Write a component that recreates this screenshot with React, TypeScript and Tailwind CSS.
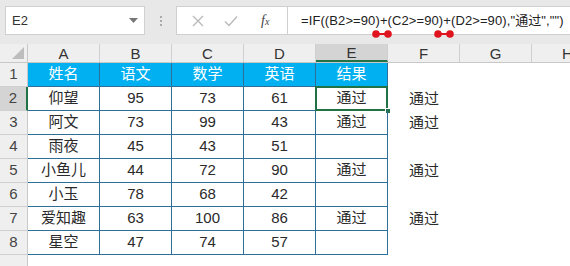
const cols = ["A", "B", "C", "D", "E", "F", "G", "H"];

const rows = [
  ["姓名", "语文", "数学", "英语", "结果"],
  ["仰望", "95", "73", "61", "通过"],
  ["阿文", "73", "99", "43", "通过"],
  ["雨夜", "45", "43", "51", ""],
  ["小鱼儿", "44", "72", "90", "通过"],
  ["小玉", "78", "68", "42", ""],
  ["爱知趣", "63", "100", "86", "通过"],
  ["星空", "47", "74", "57", ""],
];

const fcol = ["", "通过", "通过", "", "通过", "", "通过", ""];

function Dumbbell({ left }: { left: number }) {
  return (
    <svg className="absolute top-[30px]" style={{ left }} width="20" height="8" viewBox="0 0 20 8">
      <line x1="4" y1="4" x2="16" y2="4" stroke="#e0141e" strokeWidth="2" />
      <circle cx="4" cy="4" r="3.8" fill="#e0141e" />
      <circle cx="16" cy="4" r="3.8" fill="#e0141e" />
    </svg>
  );
}

export default function App() {
  return (
    <div className="w-[570px] h-[266px] overflow-hidden bg-white font-['Liberation_Sans','Noto_Sans_CJK_SC',sans-serif] text-[#2a2a2a]">
      {/* formula bar */}
      <div className="relative h-[44px] bg-[#e8e8e8] flex items-start pt-[6px]">
        <div className="ml-[5px] w-[140px] h-[29px] bg-white border border-[#d0d0d0] flex items-center justify-between pl-[6px] pr-[6px]">
          <span className="text-[13px] text-[#333]">E2</span>
          <svg width="9" height="5" viewBox="0 0 9 5"><path d="M0 0h9L4.5 5z" fill="#777" /></svg>
        </div>
        <div className="w-[31px] h-[29px] flex flex-col items-center justify-center gap-[2px]">
          <span className="w-[2px] h-[2px] bg-[#aaa]" />
          <span className="w-[2px] h-[2px] bg-[#aaa]" />
          <span className="w-[2px] h-[2px] bg-[#aaa]" />
        </div>
        <div className="w-[112px] h-[29px] bg-white border border-[#d0d0d0] flex items-center pl-[15px] gap-[20px]">
          <svg width="12" height="12" viewBox="0 0 12 12"><path d="M1 1l10 10M11 1L1 11" stroke="#b8b8b8" strokeWidth="1.3" /></svg>
          <svg width="14" height="12" viewBox="0 0 14 12"><path d="M1 6.5l4 4L13 1.5" stroke="#b8b8b8" strokeWidth="1.3" fill="none" /></svg>
          <span className="ml-[3px] text-[14px] italic text-[#444] font-['Liberation_Serif',serif]">f<span className="text-[10px]">x</span></span>
        </div>
        <div className="flex-1 h-[29px] bg-white border-y border-[#d0d0d0] flex items-center pl-[13px] text-[13px] tracking-[0.1px] text-[#222] whitespace-nowrap">
          =IF((B2&gt;=90)+(C2&gt;=90)+(D2&gt;=90),"通过","")
        </div>
        <Dumbbell left={372} />
        <Dumbbell left={434} />
      </div>

      {/* column headers */}
      <div className="flex h-[19px] bg-[#efefef] border-b border-[#c8c8c8] text-[15px] text-[#333]">
        <div className="w-[28px] shrink-0 border-r border-[#c8c8c8] relative">
          <svg className="absolute right-[3px] bottom-[3px]" width="12" height="12" viewBox="0 0 12 12"><path d="M12 0v12H0z" fill="#bdbdbd" /></svg>
        </div>
        {cols.map((c) => (
          <div
            key={c}
            className={
              "w-[72px] shrink-0 flex items-center justify-center leading-none border-r border-[#d0d0d0] " +
              (c === "E" ? "bg-[#d4d4d4] border-b-2 border-b-[#217346]" : "")
            }
          >
            {c}
          </div>
        ))}
      </div>

      {/* rows */}
      {[...rows, null].map((r, i) => (
        <div key={i} className="flex h-[24px]">
          <div
            className={
              "w-[28px] shrink-0 flex items-end justify-center pb-[1px] text-[15px] text-[#444] border-b border-[#d0d0d0] " +
              (i === 1 ? "bg-[#d4d4d4] border-r-2 border-r-[#217346]" : "bg-[#efefef] border-r border-r-[#c8c8c8]")
            }
          >
            {r ? i + 1 : ""}
          </div>
          {r &&
            r.map((v, j) => (
              <div
                key={j}
                className={
                  "relative w-[72px] shrink-0 flex items-center justify-center text-[15px] border-r border-b border-[#2d6f99] " +
                  (i === 0 ? "bg-[#00b0f0] text-white" : "")
                }
              >
                {v}
                {i === 1 && j === 4 && (
                  <>
                    <div className="absolute -left-[1px] -top-[1px] w-[73px] h-[25px] border-2 border-[#217346]" />
                    <div className="absolute -right-[4px] -bottom-[4px] w-[6px] h-[6px] bg-[#217346] border border-white" />
                  </>
                )}
              </div>
            ))}
          {r && (
            <div className="w-[72px] shrink-0 flex items-center justify-center text-[15px]">{fcol[i]}</div>
          )}
        </div>
      ))}
    </div>
  );
}
